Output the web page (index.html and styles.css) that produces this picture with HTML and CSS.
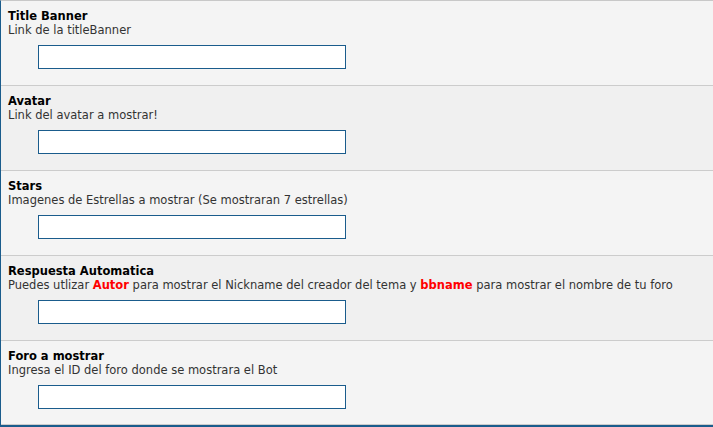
FILE: index.html
```html
<!DOCTYPE html>
<html>
<head>
<meta charset="utf-8">
<link rel="stylesheet" href="styles.css">
</head>
<body>
<div class="panel">
  <div class="row light">
    <div class="title">Title Banner</div>
    <div class="desc">Link de la titleBanner</div>
    <input class="field" type="text">
  </div>
  <div class="row dark">
    <div class="title">Avatar</div>
    <div class="desc">Link del avatar a mostrar!</div>
    <input class="field" type="text">
  </div>
  <div class="row light">
    <div class="title">Stars</div>
    <div class="desc">Imagenes de Estrellas a mostrar (Se mostraran 7 estrellas)</div>
    <input class="field" type="text">
  </div>
  <div class="row dark">
    <div class="title">Respuesta Automatica</div>
    <div class="desc">Puedes utlizar <b class="hl">Autor</b> para mostrar el Nickname del creador del tema y <b class="hl">bbname</b> para mostrar el nombre de tu foro</div>
    <input class="field" type="text">
  </div>
  <div class="row light">
    <div class="title">Foro a mostrar</div>
    <div class="desc">Ingresa el ID del foro donde se mostrara el Bot</div>
    <input class="field" type="text">
  </div>
</div>
</body>
</html>
```
FILE: styles.css
```css
html, body {
  margin: 0;
  padding: 0;
  background: #f4f4f4;
}
.panel {
  width: 712px;
  border-left: 1px solid #1a5c8c;
  border-top: 1px solid #c8c8c8;
  border-bottom: 2px solid #1a5c8c;
  font-family: "DejaVu Sans", Verdana, sans-serif;
}
.row {
  height: 85px;
  box-sizing: border-box;
  border-bottom: 1px solid #cccccc;
  padding: 8px 7px 0;
  display: flex;
  flex-direction: column;
  align-items: flex-start;
}
.row:last-child {
  height: 84px;
}
.light { background: #f4f4f4; }
.dark { background: #f0f0f0; }
.title {
  font-size: 11.5px;
  font-weight: bold;
  color: #000;
  line-height: 14px;
}
.desc {
  font-size: 11.5px;
  color: #333;
  line-height: 14px;
}
.hl {
  color: #ff0000;
}
.field {
  margin: 8px 0 0 30px;
  width: 308px;
  height: 24px;
  box-sizing: border-box;
  border: 1px solid #1a5c8c;
  background: #fff;
  padding: 0;
}
```
